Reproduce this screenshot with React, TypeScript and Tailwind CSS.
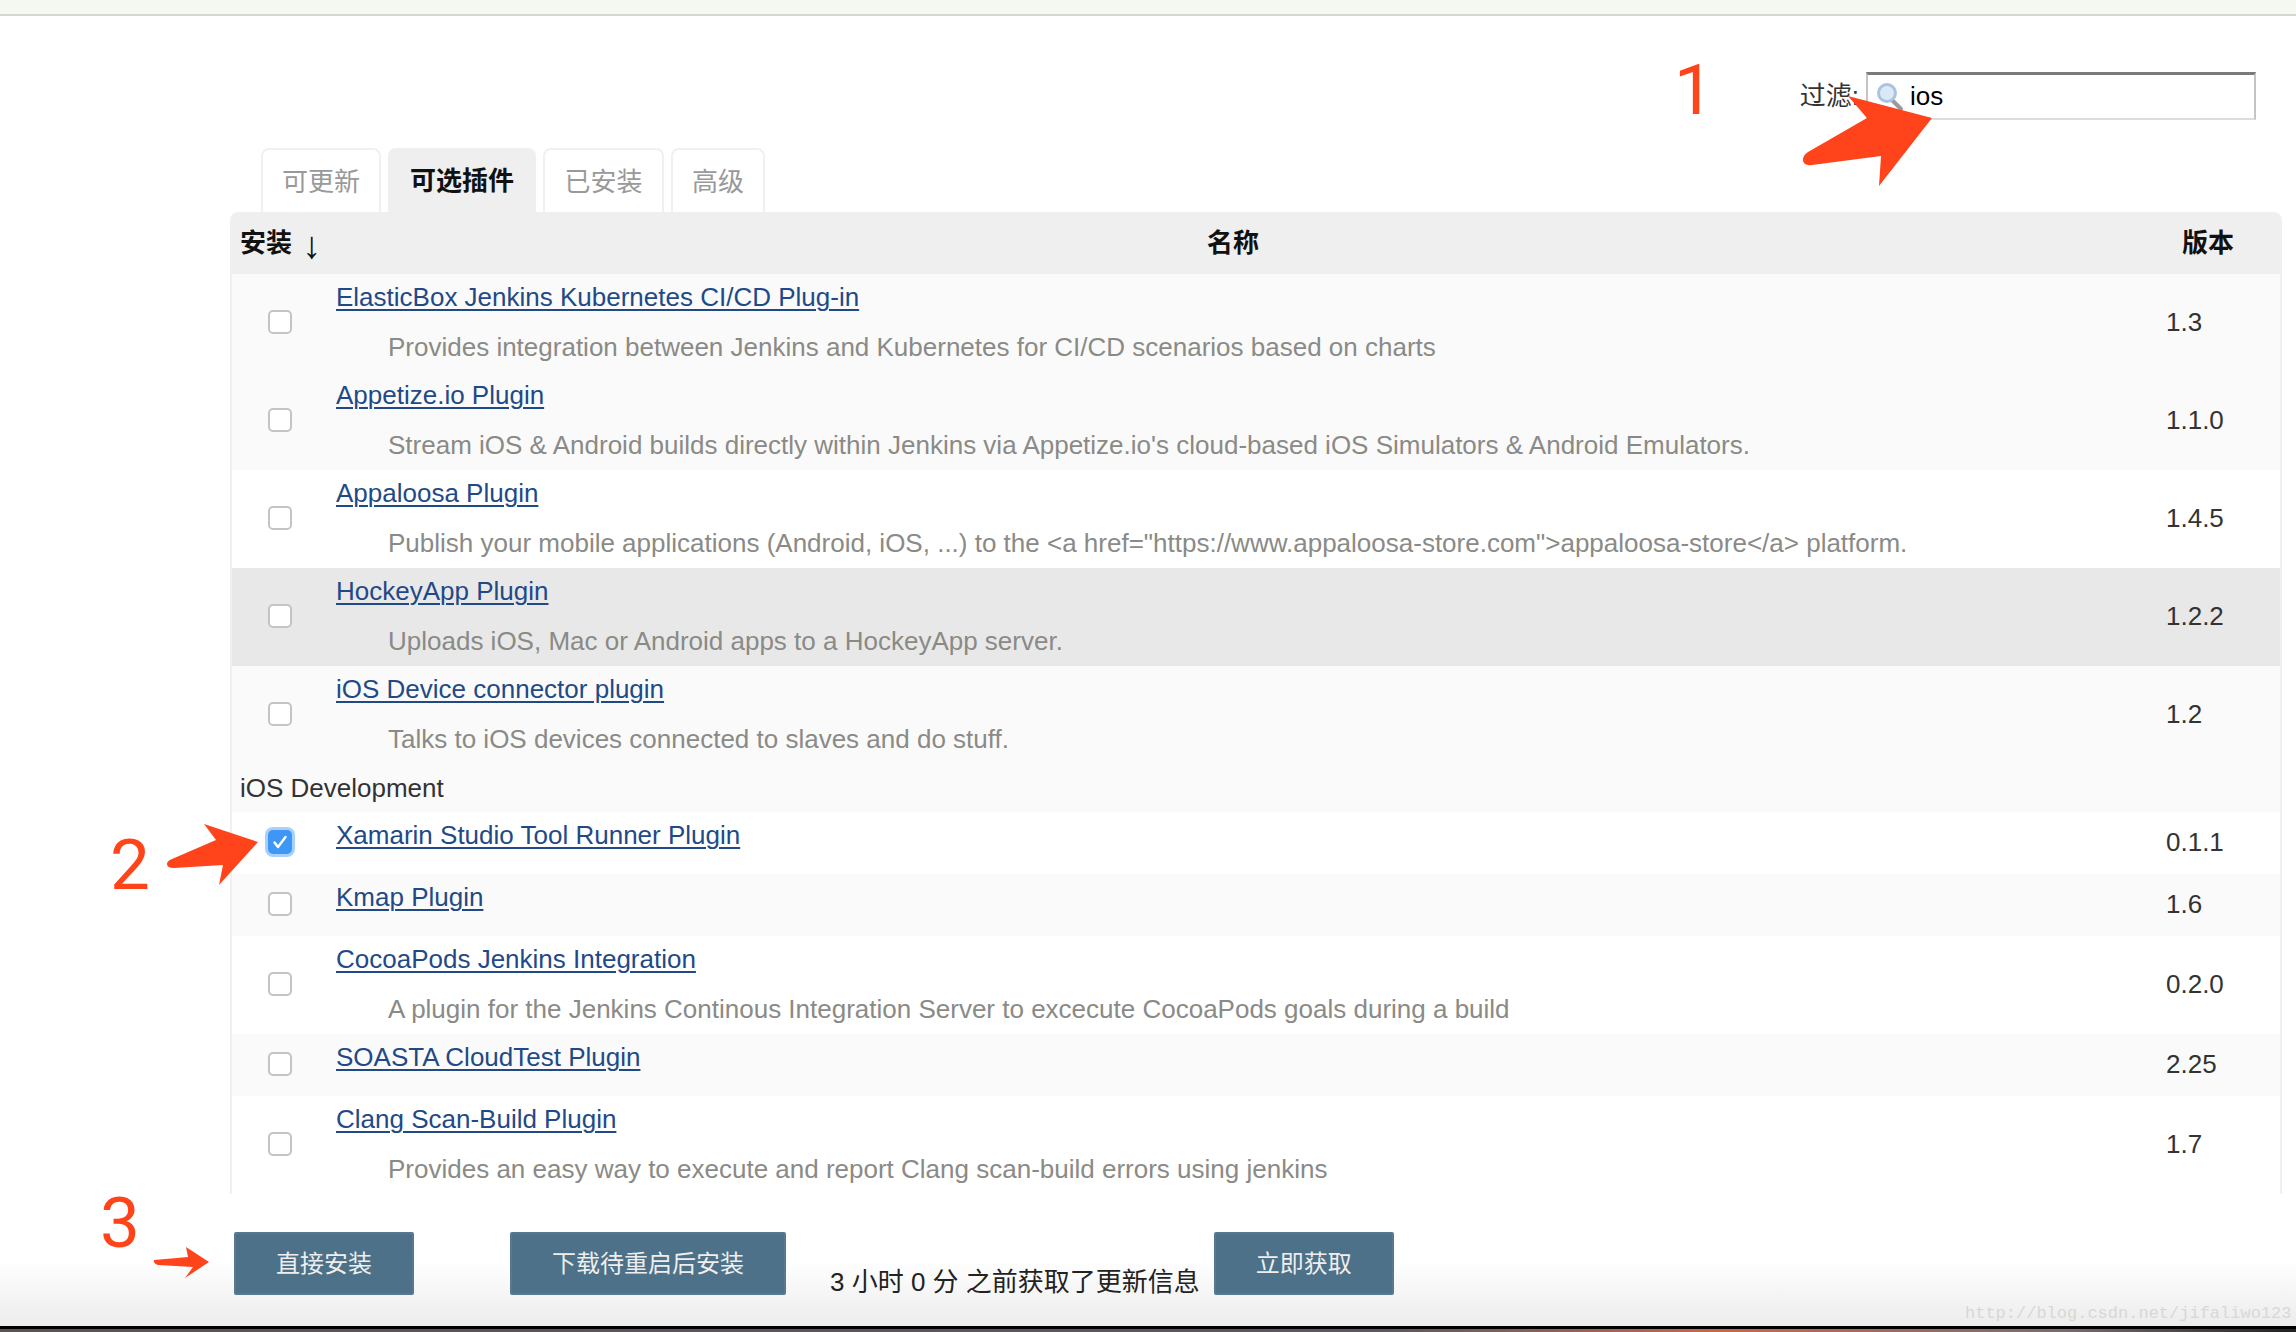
const FONT = "font-['Liberation_Sans','Noto_Sans_CJK_SC',sans-serif]";

type Plugin = {
  name: string;
  desc?: string;
  version: string;
  checked?: boolean;
  bg: string;
};

const firstGroup: Plugin[] = [
  {
    name: 'ElasticBox Jenkins Kubernetes CI/CD Plug-in',
    desc: 'Provides integration between Jenkins and Kubernetes for CI/CD scenarios based on charts',
    version: '1.3',
    bg: 'bg-[#fafafa]',
  },
  {
    name: 'Appetize.io Plugin',
    desc: "Stream iOS & Android builds directly within Jenkins via Appetize.io's cloud-based iOS Simulators & Android Emulators.",
    version: '1.1.0',
    bg: 'bg-[#fafafa]',
  },
  {
    name: 'Appaloosa Plugin',
    desc: 'Publish your mobile applications (Android, iOS, ...) to the <a href="https://www.appaloosa-store.com">appaloosa-store</a> platform.',
    version: '1.4.5',
    bg: 'bg-white',
  },
  {
    name: 'HockeyApp Plugin',
    desc: 'Uploads iOS, Mac or Android apps to a HockeyApp server.',
    version: '1.2.2',
    bg: 'bg-[#e8e8e8]',
  },
  {
    name: 'iOS Device connector plugin',
    desc: 'Talks to iOS devices connected to slaves and do stuff.',
    version: '1.2',
    bg: 'bg-[#fafafa]',
  },
];

const secondGroup: Plugin[] = [
  { name: 'Xamarin Studio Tool Runner Plugin', version: '0.1.1', checked: true, bg: 'bg-white' },
  { name: 'Kmap Plugin', version: '1.6', bg: 'bg-[#fafafa]' },
  {
    name: 'CocoaPods Jenkins Integration',
    desc: 'A plugin for the Jenkins Continous Integration Server to excecute CocoaPods goals during a build',
    version: '0.2.0',
    bg: 'bg-white',
  },
  { name: 'SOASTA CloudTest Plugin', version: '2.25', bg: 'bg-[#fafafa]' },
  {
    name: 'Clang Scan-Build Plugin',
    desc: 'Provides an easy way to execute and report Clang scan-build errors using jenkins',
    version: '1.7',
    bg: 'bg-white',
  },
];

function Checkbox({ checked }: { checked?: boolean }) {
  if (checked) {
    return (
      <div className="flex h-6 w-6 items-center justify-center rounded-[5px] bg-[#3f97f5] shadow-[0_0_0_3px_#a9d0fb]">
        <svg width="16" height="16" viewBox="0 0 16 16" fill="none">
          <path d="M2.5 8.5 L6 13 L13.5 3" stroke="white" strokeWidth="2.4" strokeLinecap="round" strokeLinejoin="round" />
        </svg>
      </div>
    );
  }
  return <div className="h-6 w-6 rounded-[5px] border-2 border-[#c4c4c4] bg-white" />;
}

function Row({ plugin }: { plugin: Plugin }) {
  return (
    <div className={`flex items-center ${plugin.bg} ${plugin.desc ? 'h-[98px]' : 'h-[62px]'}`}>
      <div className="w-[104px] shrink-0 pl-[36px] pb-[3px]">
        <Checkbox checked={plugin.checked} />
      </div>
      <div className="h-full flex-1 pt-1">
        <div className="h-[38px] leading-[38px]">
          <a className="text-[#1f4a87] underline decoration-2 underline-offset-[3px]">{plugin.name}</a>
        </div>
        {plugin.desc && <div className="mt-[13px] pl-[52px] leading-[36px] text-[#8a8a86]">{plugin.desc}</div>}
      </div>
      <div className="w-[114px] shrink-0 pb-[2px] text-[#333]">{plugin.version}</div>
    </div>
  );
}

function Button({ label, className }: { label: string; className: string }) {
  return (
    <button className={`flex h-[63px] items-center justify-center rounded-[2px] border-2 border-[#55798f] bg-[#4d7188] text-[24px] text-[#eeeeee] ${className}`}>
      {label}
    </button>
  );
}

export default function App() {
  return (
    <div className={`relative flex h-[1332px] w-[2296px] flex-col overflow-hidden bg-white text-[26px] ${FONT}`}>
      <div className="h-4 shrink-0 border-b-2 border-[#d5d8d0] bg-[#f5f8f1]" />

      {/* filter */}
      <div className="mt-[56px] flex h-12 shrink-0 items-center justify-end pr-10">
        <span className="mr-[7px] text-[#333]">过滤:</span>
        <div className="flex h-12 w-[390px] items-center border-2 border-t-[3px] border-[#c4c4c4] border-t-[#7a7a7a] border-b-[#dddddd] bg-white pl-2">
          <svg width="28" height="30" viewBox="0 0 28 30" className="shrink-0">
            <path d="M16 18 L25 27" stroke="#9a9a9a" strokeWidth="4" strokeLinecap="round" />
            <circle cx="11" cy="11" r="8.5" fill="#dbe8f6" stroke="#a9c3e2" strokeWidth="3" />
          </svg>
          <span className="ml-[6px] text-black">ios</span>
        </div>
      </div>

      {/* tabs */}
      <div className="mt-7 flex h-16 shrink-0 items-stretch gap-[7px] pl-[261px]">
        <div className="flex w-[120px] items-center justify-center rounded-t-[8px] border-2 border-b-0 border-[#f0f0f0] pt-[2px] text-[#999]">可更新</div>
        <div className="flex w-[148px] items-center justify-center rounded-t-[8px] bg-[#efefef] pt-[2px] font-bold text-[#111]">可选插件</div>
        <div className="flex w-[121px] items-center justify-center rounded-t-[8px] border-2 border-b-0 border-[#f0f0f0] pt-[2px] text-[#999]">已安装</div>
        <div className="flex w-[94px] items-center justify-center rounded-t-[8px] border-2 border-b-0 border-[#f0f0f0] pt-[2px] text-[#999]">高级</div>
      </div>

      {/* plugin table */}
      <div className="ml-[230px] w-[2052px] shrink-0 overflow-hidden rounded-t-[8px] border-x-2 border-[#f0f0f0]">
        <div className="flex h-[62px] items-center bg-[#efefef] font-bold text-[#111]">
          <div className="flex w-[104px] shrink-0 items-center pl-2">
            安装
            <span className="ml-[10px] mt-[3px] font-['Liberation_Serif',serif] text-[38px] font-normal leading-none">↓</span>
          </div>
          <div className="flex-1 pr-[36px] text-center">名称</div>
          <div className="w-[114px] shrink-0 pl-4">版本</div>
        </div>
        {firstGroup.map((plugin) => (
          <Row key={plugin.name} plugin={plugin} />
        ))}
        <div className="flex h-12 items-center bg-[#fafafa] pl-2 text-[#333]">iOS Development</div>
        {secondGroup.map((plugin) => (
          <Row key={plugin.name} plugin={plugin} />
        ))}
      </div>

      {/* bottom bar */}
      <div className="flex h-[132px] shrink-0 items-start bg-gradient-to-b from-white from-50% to-[#ececec] pt-[38px]">
        <Button label="直接安装" className="ml-[234px] w-[180px]" />
        <Button label="下载待重启后安装" className="ml-[96px] w-[276px]" />
        <span className="ml-[44px] mt-[32px] text-[26px] leading-[36px] text-[#222]">3 小时 0 分 之前获取了更新信息</span>
        <Button label="立即获取" className="ml-[14px] w-[180px]" />
      </div>
      <div className="h-[3px] shrink-0 bg-black" />
      <div className="h-[3px] shrink-0 bg-[linear-gradient(90deg,#5b5254_0%,#5b5660_60%,#c46a4a_75%,#7a6a70_90%,#222_100%)]" />

      {/* screenshot annotations */}
      <span className="absolute left-[1674px] top-[54px] font-['Roboto',sans-serif] text-[71px] font-normal leading-none text-[#ff4419]">1</span>
      <span className="absolute left-[110px] top-[829px] font-['Roboto',sans-serif] text-[71px] font-normal leading-none text-[#ff4419]">2</span>
      <span className="absolute left-[100px] top-[1187px] font-['Roboto',sans-serif] text-[71px] font-normal leading-none text-[#ff4419]">3</span>

      <svg className="absolute left-0 top-0" width="2296" height="1332" viewBox="0 0 2296 1332" fill="#ff441b">
        <path d="M1848 96 L1932 118 L1879 186 L1881 156 L1812 165 Q1803 166 1803 160 Q1803 155 1808 152 L1867 118 Z" />
        <path d="M258 842 L219 885 L223 865 L174 868 Q167 868 167 864 Q167 861 172 859 L216 840 L204 824 Z" />
        <path d="M209 1262 L185 1278 L193 1267 L158 1265 Q153 1263 154 1260 L188 1257 L186 1247 Z" />
      </svg>

      <span className="absolute left-[1965px] top-[1301px] font-['Liberation_Mono',monospace] text-[17px] text-[#d8d8d4]">http://blog.csdn.net/jifaliwo123</span>
    </div>
  );
}
